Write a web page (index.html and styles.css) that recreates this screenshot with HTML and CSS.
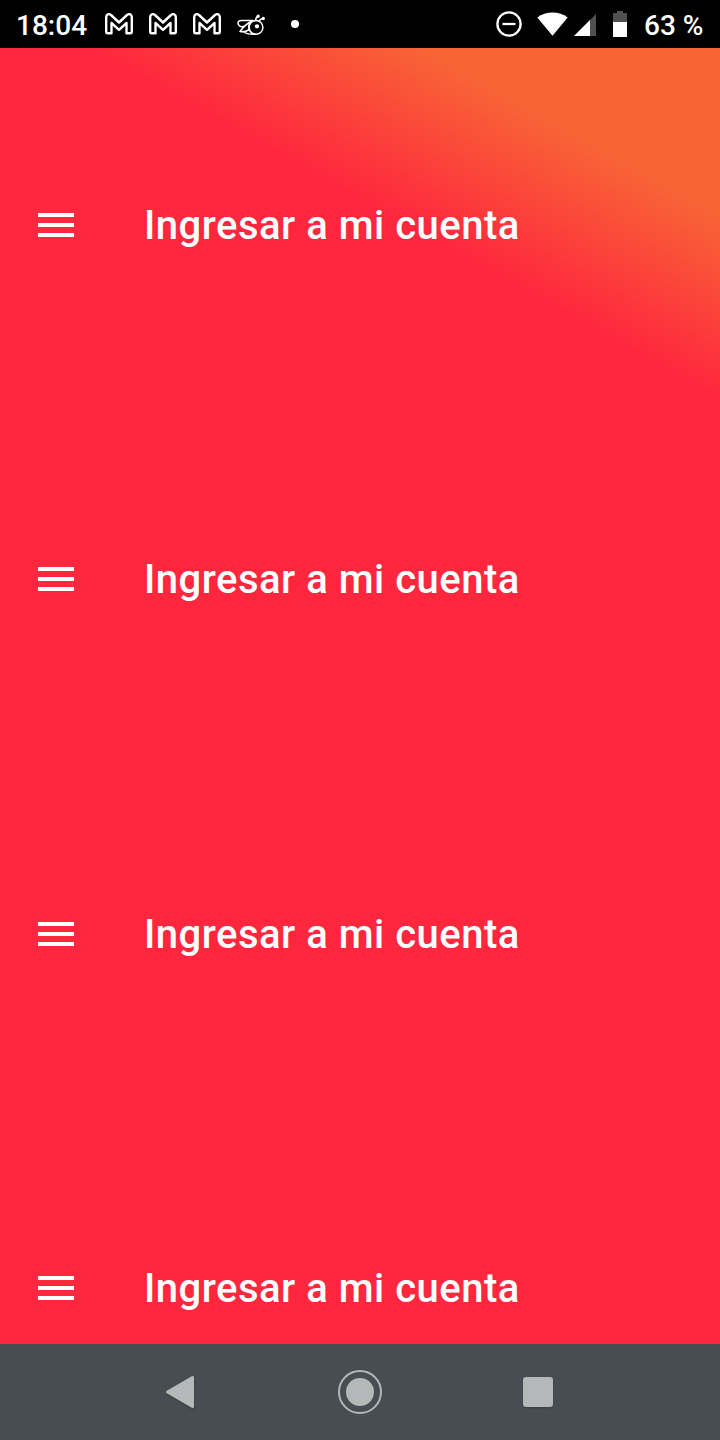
FILE: index.html
```html
<!DOCTYPE html>
<html lang="es">
<head>
<meta charset="utf-8">
<title>Ingresar a mi cuenta</title>
<link rel="stylesheet" href="styles.css">
</head>
<body>
<svg width="0" height="0" class="defs" aria-hidden="true">
  <symbol id="mail" viewBox="0 0 28 22">
    <path d="M1.200 18.800V4C1.200 1.300 4 .3 6 2L14 9.500 22 2C24 .3 26.800 1.300 26.800 4v14.800q0 1.500-1.500 1.500H21.500V10L14 16.800 6.500 10v10.300H2.700q-1.500 0-1.500-1.500Z" fill="none" stroke="#fff" stroke-width="2.400" stroke-linejoin="round"/>
  </symbol>
  <symbol id="menu" viewBox="0 0 36 24">
    <path d="M0 0h36v4H0zM0 10h36v4H0zM0 20h36v4H0z" fill="#fff"/>
  </symbol>
</svg>
<div class="phone">
  <header class="status">
    <div class="status-left">
      <span class="clock">18:04</span>
      <svg class="mail"><use href="#mail"/></svg>
      <svg class="mail"><use href="#mail"/></svg>
      <svg class="mail"><use href="#mail"/></svg>
      <svg class="bee" viewBox="0 0 28 22" fill="none" stroke="#fff" stroke-width="1.500" stroke-linecap="round" stroke-linejoin="round">
        <path d="M16 6.500H4.500C.7 6.500 0 9.700 2.500 11.800 4 13 6 12.800 7.500 12M15.500 7C11 8.500 7 12 3 17.500c4 .6 7.500-.3 9.500-2.500M6 17.500c3 2.200 7 3 12.500 2.700M13 8.500c-2 3.500-1.500 8 2 11"/>
        <circle cx="19" cy="13.400" r="6.900"/>
        <path d="M18.500 6.500c.2-2 1-3.500 2.500-4M22 7.300c.8-1.600 2-2.400 4-2.700"/>
        <circle cx="21.200" cy="2.100" r=".9" fill="#fff"/>
        <circle cx="26.300" cy="4.500" r=".9" fill="#fff"/>
        <circle cx="20" cy="12.300" r="1.400" fill="#fff"/>
      </svg>
      <span class="more"></span>
    </div>
    <div class="status-right">
      <svg class="dnd" viewBox="0 0 26 26" fill="none" stroke="#fff" stroke-width="2.300"><circle cx="13" cy="13" r="11.600"/><path d="M6.500 13h13"/></svg>
      <svg class="wifi" viewBox="0 0 32 24"><path d="M.3 5.300C9-1.600 23-1.600 31.700 5.300L16 24Z" fill="#fff"/></svg>
      <svg class="signal" viewBox="0 0 22 22"><path d="M22 0v22H0Z" fill="#505050"/><path d="M16 6v16H0Z" fill="#fff"/></svg>
      <svg class="battery" viewBox="0 0 14 26"><path d="M4 0h6v2h4v9H0V2h4z" fill="#505050"/><path d="M0 11h14v15H0z" fill="#fff"/></svg>
      <span class="percent">63 %</span>
    </div>
  </header>
  <main class="screen">
    <div class="row"><svg class="menu"><use href="#menu"/></svg><span class="title">Ingresar a mi cuenta</span></div>
    <div class="row"><svg class="menu"><use href="#menu"/></svg><span class="title">Ingresar a mi cuenta</span></div>
    <div class="row"><svg class="menu"><use href="#menu"/></svg><span class="title">Ingresar a mi cuenta</span></div>
    <div class="row"><svg class="menu"><use href="#menu"/></svg><span class="title">Ingresar a mi cuenta</span></div>
  </main>
  <nav class="nav">
    <svg class="back" viewBox="0 0 28 32"><path d="M1.500 16 26.500 1.500v29Z" fill="#b4b8b9" stroke="#b4b8b9" stroke-width="3" stroke-linejoin="round"/></svg>
    <svg class="home" viewBox="0 0 44 44"><circle cx="22" cy="22" r="21" fill="none" stroke="#b4b8b9" stroke-width="2"/><circle cx="22" cy="22" r="14" fill="#b4b8b9"/></svg>
    <span class="recent"></span>
  </nav>
</div>
</body>
</html>
```
FILE: styles.css
```css
* { box-sizing: border-box; }
body { margin: 0; font-family: Roboto, sans-serif; color: #fff; }
svg { display: block; flex: none; }
.defs { position: absolute; }
.phone { width: 720px; height: 1440px; display: flex; flex-direction: column; overflow: hidden; }

.status { height: 48px; flex: none; background: #000; display: flex; justify-content: space-between; padding: 0 16px; font-size: 28px; font-weight: 500; line-height: 44px; }
.status-left, .status-right { display: flex; align-items: center; }
.clock { width: 89px; padding-top: 4px; white-space: nowrap; }
.mail { width: 28px; height: 22px; margin-right: 16px; }
.bee { width: 28px; height: 22px; margin: 2px 26px 0 0; }
.more { width: 8px; height: 8px; border-radius: 50%; background: #fff; }
.dnd { width: 26px; height: 26px; margin-right: 15px; }
.wifi { width: 31px; height: 24px; margin-right: 6px; }
.signal { width: 22px; height: 22px; margin: 2px 17px 0 0; }
.battery { width: 14px; height: 26px; margin-right: 17px; }
.percent { width: 60px; padding-top: 4px; white-space: nowrap; }

.screen { height: 1296px; flex: none; overflow: hidden; background: linear-gradient(29.05deg, #fe273e 79.3%, #f86336 90%); }
.row { height: 354.3px; display: flex; align-items: center; gap: 70px; padding-left: 38px; }
.menu { width: 36px; height: 24px; }
.title { padding-top: 1.800px; font-size: 40px; font-weight: 500; line-height: 48px; letter-spacing: 0.5px; white-space: nowrap; }

.nav { height: 96px; flex: none; background: #464d53; display: flex; align-items: center; padding-left: 166px; }
.back { width: 28px; height: 32px; margin-right: 144px; filter: drop-shadow(0 1px 1px #0003); }
.home { width: 44px; height: 44px; margin-right: 141px; }
.recent { width: 30px; height: 30px; border-radius: 3px; background: #b4b8b9; box-shadow: 0 1px 2px #0003; }
```
